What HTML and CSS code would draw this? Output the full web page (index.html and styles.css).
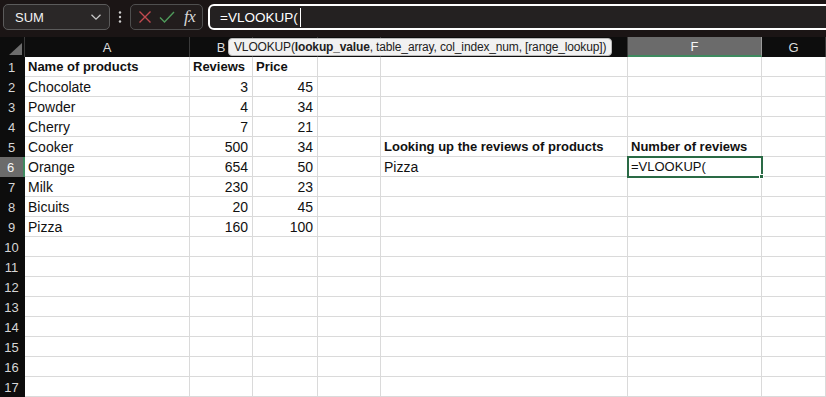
FILE: index.html
```html
<!DOCTYPE html>
<html>
<head>
<meta charset="utf-8">
<link rel="stylesheet" href="styles.css">
</head>
<body>
<div class="app">
  <div class="topbar">
    <div class="namebox">
      <span class="nb-text">SUM</span>
      <svg class="chev" width="12" height="8" viewBox="0 0 12 8"><path d="M1.5 1.8 L6 6.2 L10.5 1.8" fill="none" stroke="#c8c8c8" stroke-width="1.3"/></svg>
    </div>
    <div class="dots">
      <svg width="4" height="14" viewBox="0 0 4 14"><circle cx="2" cy="2.5" r="1.2" fill="#cfcfcf"/><circle cx="2" cy="7" r="1.2" fill="#cfcfcf"/><circle cx="2" cy="11.5" r="1.2" fill="#cfcfcf"/></svg>
    </div>
    <div class="btns">
      <svg class="ico" width="16" height="16" viewBox="0 0 16 16"><path d="M2.5 2.5 L13.5 13.5 M13.5 2.5 L2.5 13.5" stroke="#c24a4f" stroke-width="1.4" fill="none"/></svg>
      <svg class="ico" width="18" height="16" viewBox="0 0 18 16"><path d="M2 8.5 L6.5 13 L16 3" stroke="#4f9a5b" stroke-width="1.4" fill="none"/></svg>
      <span class="fx">fx</span>
    </div>
    <div class="formula"><span class="ftext">=VLOOKUP(</span><span class="caret"></span></div>
  </div>

  <div class="sheet">
    <div class="corner"><span class="tri"></span></div>
    <div class="ch">A</div><div class="ch">B</div><div class="ch"></div><div class="ch"></div><div class="ch"></div><div class="ch sel-h">F</div><div class="ch">G</div>

    <div class="rh">1</div><div class="c b">Name of products</div><div class="c b">Reviews</div><div class="c b">Price</div><div class="c"></div><div class="c"></div><div class="c"></div><div class="c"></div>
    <div class="rh">2</div><div class="c">Chocolate</div><div class="c n">3</div><div class="c n">45</div><div class="c"></div><div class="c"></div><div class="c"></div><div class="c"></div>
    <div class="rh">3</div><div class="c">Powder</div><div class="c n">4</div><div class="c n">34</div><div class="c"></div><div class="c"></div><div class="c"></div><div class="c"></div>
    <div class="rh">4</div><div class="c">Cherry</div><div class="c n">7</div><div class="c n">21</div><div class="c"></div><div class="c"></div><div class="c"></div><div class="c"></div>
    <div class="rh">5</div><div class="c">Cooker</div><div class="c n">500</div><div class="c n">34</div><div class="c"></div><div class="c b">Looking up the reviews of products</div><div class="c b">Number of reviews</div><div class="c"></div>
    <div class="rh sel-r">6</div><div class="c">Orange</div><div class="c n">654</div><div class="c n">50</div><div class="c"></div><div class="c">Pizza</div><div class="c active">=VLOOKUP(<span class="handle"></span></div><div class="c"></div>
    <div class="rh">7</div><div class="c">Milk</div><div class="c n">230</div><div class="c n">23</div><div class="c"></div><div class="c"></div><div class="c"></div><div class="c"></div>
    <div class="rh">8</div><div class="c">Bicuits</div><div class="c n">20</div><div class="c n">45</div><div class="c"></div><div class="c"></div><div class="c"></div><div class="c"></div>
    <div class="rh">9</div><div class="c">Pizza</div><div class="c n">160</div><div class="c n">100</div><div class="c"></div><div class="c"></div><div class="c"></div><div class="c"></div>
    <div class="rh">10</div><div class="c"></div><div class="c"></div><div class="c"></div><div class="c"></div><div class="c"></div><div class="c"></div><div class="c"></div>
    <div class="rh">11</div><div class="c"></div><div class="c"></div><div class="c"></div><div class="c"></div><div class="c"></div><div class="c"></div><div class="c"></div>
    <div class="rh">12</div><div class="c"></div><div class="c"></div><div class="c"></div><div class="c"></div><div class="c"></div><div class="c"></div><div class="c"></div>
    <div class="rh">13</div><div class="c"></div><div class="c"></div><div class="c"></div><div class="c"></div><div class="c"></div><div class="c"></div><div class="c"></div>
    <div class="rh">14</div><div class="c"></div><div class="c"></div><div class="c"></div><div class="c"></div><div class="c"></div><div class="c"></div><div class="c"></div>
    <div class="rh">15</div><div class="c"></div><div class="c"></div><div class="c"></div><div class="c"></div><div class="c"></div><div class="c"></div><div class="c"></div>
    <div class="rh">16</div><div class="c"></div><div class="c"></div><div class="c"></div><div class="c"></div><div class="c"></div><div class="c"></div><div class="c"></div>
    <div class="rh">17</div><div class="c"></div><div class="c"></div><div class="c"></div><div class="c"></div><div class="c"></div><div class="c"></div><div class="c"></div>

    <div class="tooltip">VLOOKUP(<b>lookup_value</b>, table_array, col_index_num, [range_lookup])</div>
  </div>
</div>
</body>
</html>
```
FILE: styles.css
```css
* { box-sizing: border-box; }
html, body { margin: 0; padding: 0; background: #ffffff; }
body { width: 826px; height: 397px; overflow: hidden; font-family: "Liberation Sans", Arial, sans-serif; }

.app { display: flex; flex-direction: column; }

.topbar {
  height: 37px;
  background: #1b1515;
  display: flex;
  align-items: flex-start;
  padding: 4px 0 0 3px;
}
.namebox {
  width: 107px;
  height: 26px;
  border: 1px solid #5b5b5b;
  border-radius: 5px;
  background: #2a2727;
  display: flex;
  align-items: center;
  justify-content: space-between;
  padding: 0 7px 0 11px;
}
.nb-text { color: #f2f2f2; font-size: 13px; }
.dots { width: 20px; height: 26px; display: flex; align-items: center; justify-content: center; }
.btns {
  width: 73px;
  height: 26px;
  border: 1px solid #4f4f4f;
  border-radius: 5px;
  background: #221d1d;
  display: flex;
  align-items: center;
  padding: 0 6px 0 6px;
  gap: 5px;
}
.fx {
  font-family: "Liberation Serif", "Times New Roman", serif;
  font-style: italic;
  color: #d8d8d8;
  font-size: 17px;
  margin-left: 3px;
  letter-spacing: -0.5px;
}
.formula {
  flex: 1;
  margin-left: 5px;
  margin-right: -6px;
  height: 26px;
  border: 2px solid #ffffff;
  border-radius: 6px;
  background: #242121;
  display: flex;
  align-items: center;
  padding-left: 10px;
}
.ftext { color: #ffffff; font-size: 13.5px; }
.caret { width: 1px; height: 19px; background: #ffffff; margin-left: 2px; }

.sheet {
  position: relative;
  display: grid;
  grid-template-columns: 25px 165px 63px 65px 63px 247px 134px 64px;
  grid-template-rows: repeat(18, 20px);
  font-size: 14px;
}
.corner { background: #0d0d0d; position: relative; border-right: 1px solid #3a3a3a; }
.tri {
  position: absolute; right: 2px; bottom: 2px;
  width: 0; height: 0;
  border-left: 13px solid transparent;
  border-bottom: 12px solid #6d6d6d;
}
.ch {
  background: #0d0d0d;
  color: #dcdcdc;
  font-size: 13px;
  display: flex; align-items: center; justify-content: center;
  border-right: 1px solid #3a3a3a;
}
.ch.sel-h { background: #6b6b6b; color: #f5f5f5; border-bottom: 2px solid #3f8a5f; border-right-color: #9a9a9a; }
.rh {
  background: #0d0d0d;
  color: #d6d6d6;
  font-size: 13px;
  display: flex; align-items: center; justify-content: center;
  padding-right: 2px;
}
.rh.sel-r { background: #6b6b6b; color: #f5f5f5; border-right: 2px solid #3f8a5f; }
.c {
  border-right: 1px solid #dadada;
  border-bottom: 1px solid #dadada;
  padding: 0 4px 0 3px;
  line-height: 20px;
  white-space: nowrap;
  overflow: visible;
  color: #111;
}
.c.n { text-align: right; }
.c.b { font-weight: bold; font-size: 13px; }
.c.active {
  position: relative;
  font-size: 13px;
  outline: 2px solid #2a6a45;
  outline-offset: -1px;
  z-index: 2;
}
.handle {
  position: absolute; right: -3px; bottom: -3px;
  width: 5px; height: 5px; background: #2a6a45; border: 1px solid #fff;
}
.tooltip {
  position: absolute;
  left: 228px; top: 1px;
  height: 18px;
  padding: 0 5px;
  background: #f1f1f1;
  border: 1px solid #b9b9b9;
  border-radius: 4px;
  color: #222;
  font-size: 12px;
  letter-spacing: -0.15px;
  line-height: 16px;
  white-space: nowrap;
  z-index: 3;
}
```
